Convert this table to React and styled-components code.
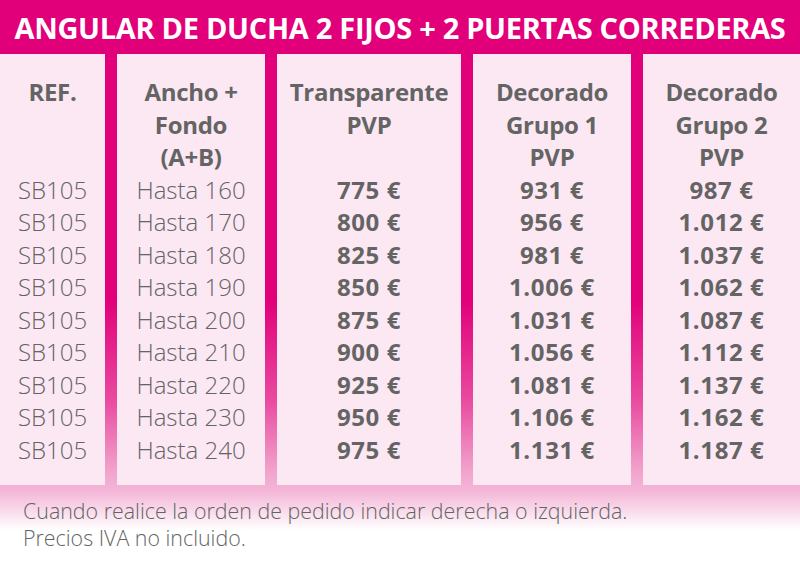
import React from "react";
import styled, { createGlobalStyle } from "styled-components";

const Global = createGlobalStyle`
  html, body { margin: 0; padding: 0; background: #fff; }
  body { font-family: "Open Sans", "Noto Sans", sans-serif; }
`;

const Page = styled.div`
  width: 800px;
  height: 582px;
  overflow: hidden;
  background: linear-gradient(
    to bottom,
    #e2007a 0px,
    #e2007a 300px,
    #e94a9f 400px,
    #f1a2cb 470px,
    #f4b5d7 490px,
    #f9d9ea 510px,
    #ffffff 530px
  );
  display: flex;
  flex-direction: column;
`;

const TitleBar = styled.h1`
  margin: 0;
  height: 54px;
  display: flex;
  align-items: center;
  justify-content: center;
  color: #fff;
  font-family: "Open Sans", sans-serif;
  font-weight: 700;
  font-size: 29px;
  letter-spacing: -0.3px;
  white-space: nowrap;
`;

const Table = styled.div`
  display: grid;
  grid-template-columns: 105px 148px 184px 158px 157px;
  column-gap: 12px;
  height: 431px;
`;

const Column = styled.div`
  background: #fce8f3;
  padding-top: 22px;
  text-align: center;
  color: #646464;
  line-height: 32.55px;
  font-size: 24px;
`;

const Head = styled.div`
  height: 97.65px;
  font-weight: 700;
  letter-spacing: -0.3px;
`;

const Cell = styled.div`
  font-weight: ${(p) => (p.$bold ? 700 : 300)};
  letter-spacing: ${(p) => (p.$bold ? "0.6px" : "0")};
`;

const Footer = styled.div`
  padding: 12px 0 0 23px;
  color: #646464;
  font-weight: 300;
  font-size: 21.4px;
  line-height: 27px;
`;

const refs = Array(9).fill("SB105");
const sizes = [160, 170, 180, 190, 200, 210, 220, 230, 240].map((n) => `Hasta ${n}`);
const trans = ["775", "800", "825", "850", "875", "900", "925", "950", "975"];
const g1 = ["931", "956", "981", "1.006", "1.031", "1.056", "1.081", "1.106", "1.131"];
const g2 = ["987", "1.012", "1.037", "1.062", "1.087", "1.112", "1.137", "1.162", "1.187"];

const columns = [
  { head: ["REF."], rows: refs, bold: false },
  { head: ["Ancho +", "Fondo", "(A+B)"], rows: sizes, bold: false },
  { head: ["Transparente", "PVP"], rows: trans.map((v) => `${v} €`), bold: true },
  { head: ["Decorado", "Grupo 1", "PVP"], rows: g1.map((v) => `${v} €`), bold: true },
  { head: ["Decorado", "Grupo 2", "PVP"], rows: g2.map((v) => `${v} €`), bold: true },
];

export default function App() {
  return (
    <>
      <Global />
      <Page>
        <TitleBar>ANGULAR DE DUCHA 2 FIJOS + 2 PUERTAS CORREDERAS</TitleBar>
        <Table>
          {columns.map((c, i) => (
            <Column key={i}>
              <Head>
                {c.head.map((l, j) => (
                  <div key={j}>{l}</div>
                ))}
              </Head>
              {c.rows.map((r, j) => (
                <Cell key={j} $bold={c.bold}>
                  {r}
                </Cell>
              ))}
            </Column>
          ))}
        </Table>
        <Footer>
          <div>Cuando realice la orden de pedido indicar derecha o izquierda.</div>
          <div>Precios IVA no incluido.</div>
        </Footer>
      </Page>
    </>
  );
}
